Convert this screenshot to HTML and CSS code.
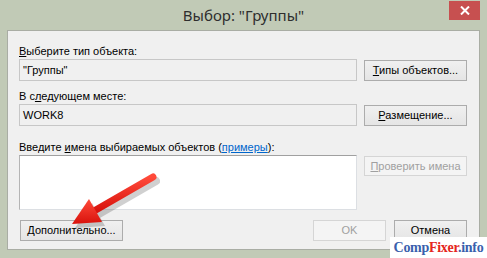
FILE: index.html
```html
<!DOCTYPE html>
<html lang="ru">
<head>
<meta charset="utf-8">
<link rel="stylesheet" href="styles.css">
</head>
<body>
<div class="window">
  <div class="titlebar">
    <div class="title">Выбор: "Группы"</div>
    <div class="close"><svg width="10" height="9" viewBox="0 0 10 9"><path d="M1 0.5 L9 8.5 M9 0.5 L1 8.5" stroke="#fff" stroke-width="2"/></svg></div>
  </div>
  <div class="client">
    <div class="label"><u>В</u>ыберите тип объекта:</div>
    <div class="row">
      <div class="field">"Группы"</div>
      <div class="btn"><u>Т</u>ипы объектов...</div>
    </div>
    <div class="label gap1">В с<u>л</u>едующем месте:</div>
    <div class="row">
      <div class="field">WORK8</div>
      <div class="btn"><u>Р</u>азмещение...</div>
    </div>
    <div class="label gap2">Введите <u>и</u>мена выбираемых объектов (<span class="link">примеры</span>):</div>
    <div class="row top">
      <div class="textarea"></div>
      <div class="btn disabled"><u>П</u>роверить имена</div>
    </div>
    <div class="bottom">
      <div class="btn wide"><u>Д</u>ополнительно...</div>
      <div class="spacer"></div>
      <div class="btn disabled ok">OK</div>
      <div class="btn">Отмена</div>
    </div>
  </div>
  <svg class="arrow" width="487" height="258" viewBox="0 0 487 258">
    <defs>
      <linearGradient id="rg" x1="0" y1="0" x2="0" y2="1">
        <stop offset="0" stop-color="#ff4a3a"/>
        <stop offset="1" stop-color="#d8120c"/>
      </linearGradient>
    </defs>
    <g transform="translate(3,4)" fill="#000" opacity="0.18">
      <line x1="153" y1="177" x2="94" y2="211" stroke="#000" stroke-width="8" stroke-linecap="round"/>
      <polygon points="72,224 102,222 89,199"/>
    </g>
    <line x1="153" y1="177" x2="94" y2="211" stroke="url(#rg)" stroke-width="7" stroke-linecap="round"/>
    <polygon points="72,224 102,222 89,199" fill="url(#rg)"/>
  </svg>
  <div class="watermark"><span class="b">Comp</span><span class="r">Fixer</span><span class="b">.info</span></div>
</div>
</body>
</html>
```

FILE: styles.css
```css
html, body {
  margin: 0;
  padding: 0;
}
body {
  width: 487px;
  height: 258px;
  overflow: hidden;
  background: #c1cab6;
}
.window {
  position: relative;
  width: 487px;
  height: 258px;
  box-sizing: border-box;
  display: flex;
  flex-direction: column;
  background: #c1cab6;
}
.titlebar {
  height: 30px;
  display: grid;
  grid-template-columns: 1fr auto 1fr;
  padding-right: 7px;
}
.title {
  grid-column: 2;
  font-family: "Noto Sans", "Open Sans", sans-serif;
  font-size: 15px;
  line-height: 30px;
  color: #2e2e2e;
  padding-left: 7px;
}
.close {
  grid-column: 3;
  justify-self: end;
  align-self: start;
  margin-top: 1px;
  width: 31px;
  height: 19px;
  background: #c75050;
  display: flex;
  align-items: center;
  justify-content: center;
}
.client {
  margin: 0 7px 8px 7px;
  flex: 1;
  background: #f0f0f0;
  border: 1px solid #a9ada4;
  padding: 14px 12px 8px 11px;
  display: flex;
  flex-direction: column;
  font-family: "Liberation Sans", Arial, sans-serif;
  font-size: 11px;
  color: #000;
}
.label {
  line-height: 13px;
  height: 13px;
  margin-bottom: 1px;
  white-space: nowrap;
}
.gap1 { margin-top: 9px; }
.gap2 { margin-top: 15px; }
.link {
  color: #0066cc;
  text-decoration: underline;
}
.row {
  display: flex;
  align-items: flex-end;
  gap: 7px;
}
.row.top {
  align-items: flex-start;
}
.field {
  width: 338px;
  height: 22px;
  box-sizing: border-box;
  border: 1px solid #c7c7c7;
  background: #f0f0f0;
  padding: 0 3px;
  line-height: 20px;
}
.btn {
  width: 103px;
  height: 21px;
  box-sizing: border-box;
  border: 1px solid #acacac;
  background: linear-gradient(#f0f0f0, #e5e5e5);
  text-align: center;
  line-height: 19px;
  white-space: nowrap;
}
.btn.disabled {
  color: #a0a0a0;
  border-color: #d5d5d5;
  background: #f4f4f4;
}
.row.top .btn {
  margin-top: 1px;
  height: 20px;
  line-height: 18px;
}
.textarea {
  width: 338px;
  height: 55px;
  box-sizing: border-box;
  background: #fff;
  border: 1px solid #dcdfe3;
  border-top-color: #a0a0a0;
  border-left-color: #b4b4b4;
}
.bottom {
  margin-top: auto;
  display: flex;
  align-items: center;
  gap: 8px;
}
.btn.wide {
  margin-left: 1px;
}
.spacer {
  flex: 1;
}
.btn.ok {
  width: 73px;
}
.bottom .btn:last-child {
  width: 73px;
}
.arrow {
  position: absolute;
  left: 0;
  top: 0;
  pointer-events: none;
}
.watermark {
  position: absolute;
  right: 0;
  bottom: 0;
  width: 97px;
  height: 21px;
  background: #fff;
  font-family: "Liberation Serif", "Times New Roman", serif;
  font-weight: bold;
  font-size: 14px;
  letter-spacing: -0.3px;
  line-height: 21px;
  text-align: center;
  white-space: nowrap;
}
.watermark .b { color: #3a5fad; }
.watermark .r { color: #e52620; }
```
